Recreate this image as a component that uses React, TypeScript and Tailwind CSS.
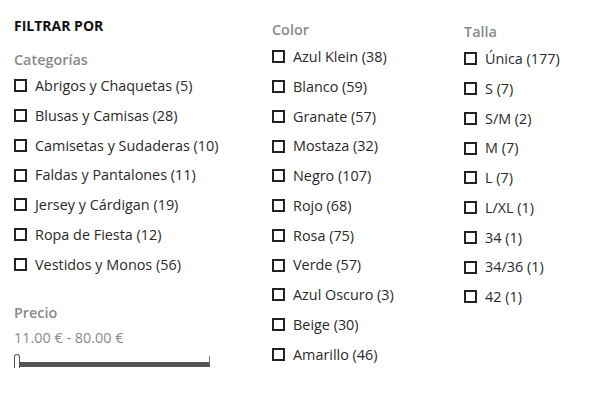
const categorias = [
  'Abrigos y Chaquetas (5)',
  'Blusas y Camisas (28)',
  'Camisetas y Sudaderas (10)',
  'Faldas y Pantalones (11)',
  'Jersey y Cárdigan (19)',
  'Ropa de Fiesta (12)',
  'Vestidos y Monos (56)',
];

const colores = [
  'Azul Klein (38)',
  'Blanco (59)',
  'Granate (57)',
  'Mostaza (32)',
  'Negro (107)',
  'Rojo (68)',
  'Rosa (75)',
  'Verde (57)',
  'Azul Oscuro (3)',
  'Beige (30)',
  'Amarillo (46)',
];

const tallas = ['Única (177)', 'S (7)', 'S/M (2)', 'M (7)', 'L (7)', 'L/XL (1)', '34 (1)', '34/36 (1)', '42 (1)'];

function Option({ label }: { label: string }) {
  return (
    <label className="flex h-[29.75px] items-center gap-2">
      <span className="h-[13px] w-[13px] shrink-0 border-2 border-[#222]" />
      <span className="text-[14.4px] text-[#2a2a2a]">{label}</span>
    </label>
  );
}

function Heading({ children }: { children: string }) {
  return <div className="text-[14.4px] font-semibold leading-[20px] text-[#8a8a8a]">{children}</div>;
}

export default function App() {
  return (
    <div className="flex h-[410px] w-[600px] bg-white pl-[14px] font-['Open_Sans','Noto_Sans',sans-serif]">
      <div className="w-[258px] pt-[16px]">
        <div className="text-[14px] font-bold leading-[20px] text-[#111]">FILTRAR POR</div>
        <div className="mt-[14px]">
          <Heading>Categorías</Heading>
        </div>
        <div className="mt-[1px] flex flex-col">
          {categorias.map((c) => (
            <Option key={c} label={c} />
          ))}
        </div>
        <div className="mt-[24px]">
          <Heading>Precio</Heading>
        </div>
        <div className="mt-[5px] text-[14.4px] leading-[20px] text-[#8a8a8a]">11.00 € - 80.00 €</div>
        <div className="relative mt-[5px] h-[16px] w-[196px]">
          <div className="absolute left-[5px] right-0 top-[9px] h-[5px] bg-[#555]" />
          <div className="absolute left-0 top-[1px] h-[14px] w-[6px] rounded-t-full border border-b-0 border-[#555] bg-white" />
          <div className="absolute right-0 top-[3px] h-[8px] w-[1px] bg-[#777]" />
        </div>
      </div>
      <div className="w-[192px] pt-[20px]">
        <Heading>Color</Heading>
        <div className="mt-[2px] flex flex-col">
          {colores.map((c) => (
            <Option key={c} label={c} />
          ))}
        </div>
      </div>
      <div className="pt-[22px]">
        <Heading>Talla</Heading>
        <div className="mt-[2px] flex flex-col">
          {tallas.map((c) => (
            <Option key={c} label={c} />
          ))}
        </div>
      </div>
    </div>
  );
}
